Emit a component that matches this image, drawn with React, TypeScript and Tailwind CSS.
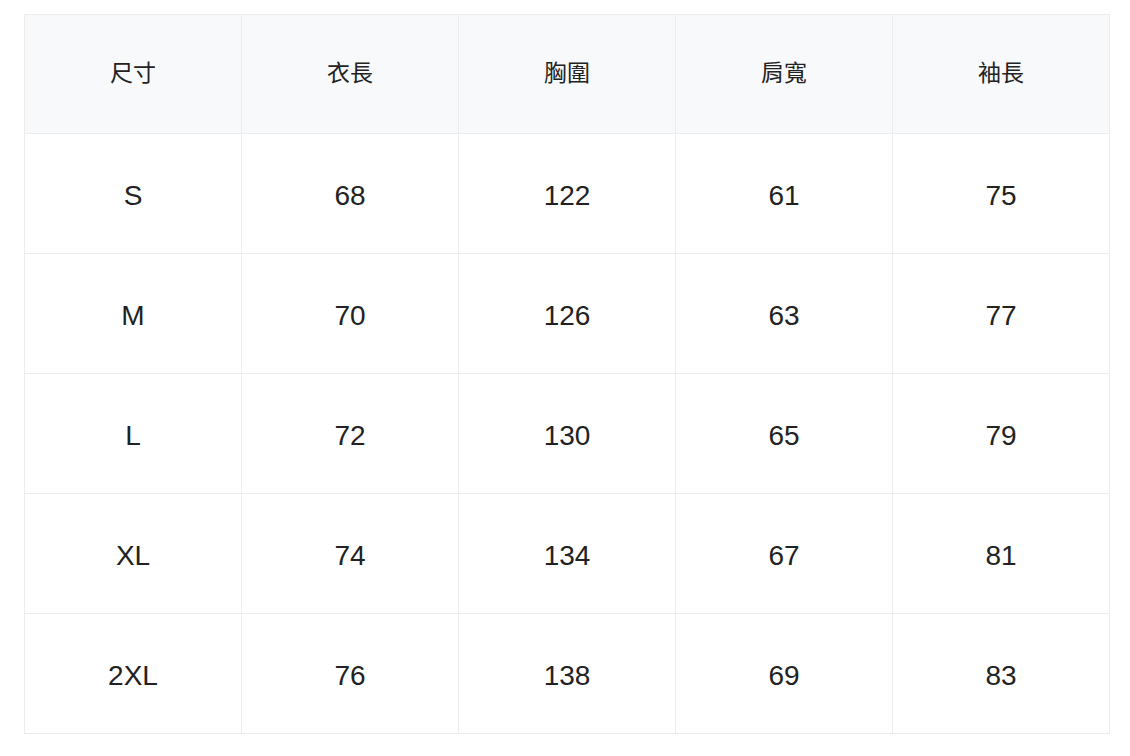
const headers = ['尺寸', '衣長', '胸圍', '肩寬', '袖長']

const rows = [
  ['S', '68', '122', '61', '75'],
  ['M', '70', '126', '63', '77'],
  ['L', '72', '130', '65', '79'],
  ['XL', '74', '134', '67', '81'],
  ['2XL', '76', '138', '69', '83'],
]

const App = () => {
  return (
    <div
      className="min-h-screen w-[1130px] h-[756px] bg-white pl-[24px] pt-[14px] text-[#222]"
      style={{ fontFamily: '"Liberation Sans", "Noto Sans CJK TC", sans-serif' }}
    >
      <table className="border-collapse table-fixed w-[1084px]">
        <thead>
          <tr className="h-[119px] bg-[#f8f9fb]">
            {headers.map((h) => (
              <th
                key={h}
                className="border border-[#ececec] w-[217px] pb-[6px] text-[23px] font-normal text-center align-middle"
                style={{ fontFamily: '"Noto Sans CJK TC", sans-serif' }}
              >
                {h}
              </th>
            ))}
          </tr>
        </thead>
        <tbody>
          {rows.map((r) => (
            <tr key={r[0]} className="h-[120px]">
              {r.map((c, i) => (
                <td
                  key={i}
                  className="border border-[#ececec] pt-[4px] text-[28px] text-center align-middle"
                >
                  {c}
                </td>
              ))}
            </tr>
          ))}
        </tbody>
      </table>
    </div>
  )
}

export default App
